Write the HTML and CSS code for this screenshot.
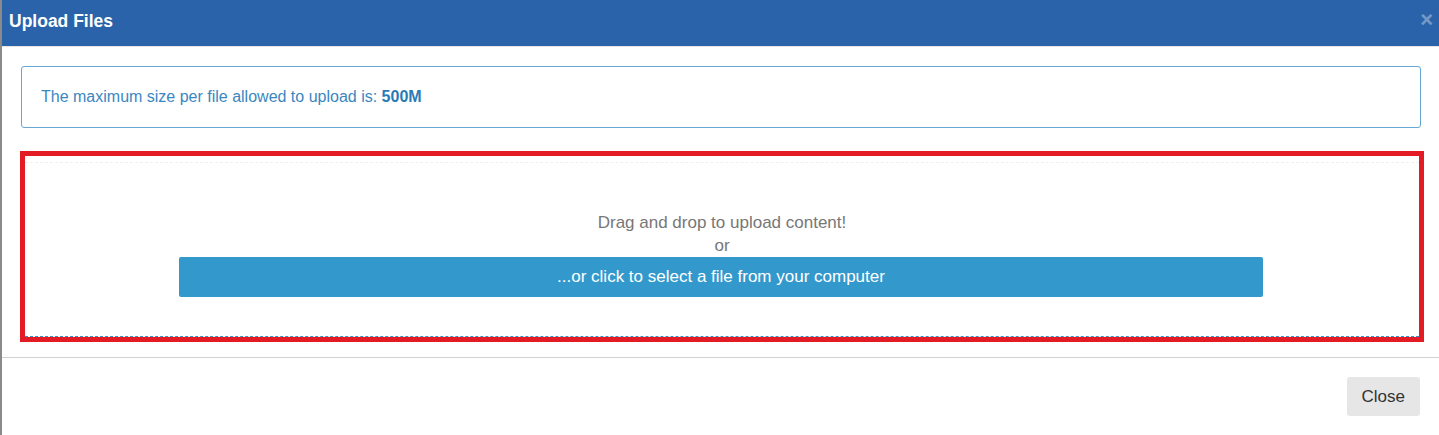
FILE: index.html
```html
<!DOCTYPE html>
<html lang="en">
<head>
<meta charset="UTF-8">
<meta name="viewport" content="width=device-width, initial-scale=1.0">
<title>Upload Files</title>
<link rel="stylesheet" href="styles.css">
</head>
<body>
<div class="modal">
  <div class="modal-header">
    <h4 class="modal-title">Upload Files</h4>
    <span class="close">&times;</span>
  </div>
  <div class="modal-body">
    <div class="info-box">
      The maximum size per file allowed to upload is: <b>500M</b>
    </div>
    <div class="highlight">
      <div class="dropzone">
        <div class="drop-text">Drag and drop to upload content!</div>
        <div class="drop-text">or</div>
        <button class="select-btn" type="button">...or click to select a file from your computer</button>
      </div>
    </div>
  </div>
  <div class="modal-footer">
    <button class="close-btn" type="button">Close</button>
  </div>
</div>
</body>
</html>
```

FILE: styles.css
```css
body {
  margin: 0;
  font-family: "Liberation Sans", Arial, sans-serif;
  background: #fff;
}
.modal {
  border-left: 2px solid #8a8a8a;
  height: 435px;
  box-sizing: border-box;
}
.modal-header {
  display: flex;
  align-items: center;
  justify-content: space-between;
  height: 46px;
  background-color: #2a63aa;
  border-bottom: 1px solid #e5e5e5;
  padding: 0 6px 0 7px;
}
.modal-title {
  margin: 0;
  color: #fff;
  font-size: 17.5px;
  font-weight: bold;
  padding-bottom: 3px;
}
.close {
  color: #fff;
  opacity: 0.35;
  font-size: 22px;
  font-weight: bold;
  line-height: 1;
  margin-top: -7px;
}
.modal-body {
  padding: 19px 18px 15px 19px;
}
.info-box {
  border: 1px solid #66a8d3;
  border-radius: 3px;
  padding: 20px 19px;
  color: #3a87bf;
  font-size: 16px;
  line-height: 20px;
  margin-bottom: 23px;
}
.info-box b {
  color: #2a7bb5;
}
.highlight {
  border: 5px solid #e31b25; /* annotation frame */
  margin: 0 -3px 0 -1px;
}
.dropzone {
  border-top: 1px dashed #f0f0f0;
  border-bottom: 1px dashed #3b8fc4;
  margin-top: 6px;
  padding: 48px 0 39px;
  text-align: center;
}
.drop-text {
  color: #777;
  font-size: 17px;
  line-height: 23px;
}
.select-btn {
  display: block;
  width: 1084px;
  height: 40px;
  margin-left: 154px;
  border: none;
  border-radius: 2px;
  background-color: #3399cc;
  color: #fff;
  font-family: inherit;
  font-size: 17px;
  cursor: pointer;
}
.modal-footer {
  display: flex;
  justify-content: flex-end;
  border-top: 1px solid #d2d2d2;
  padding: 19px 19px 20px;
}
.close-btn {
  height: 39px;
  padding: 0 15px;
  border: none;
  border-radius: 3px;
  background-color: #e6e6e6;
  color: #333;
  font-family: inherit;
  font-size: 17px;
  cursor: pointer;
}
```
